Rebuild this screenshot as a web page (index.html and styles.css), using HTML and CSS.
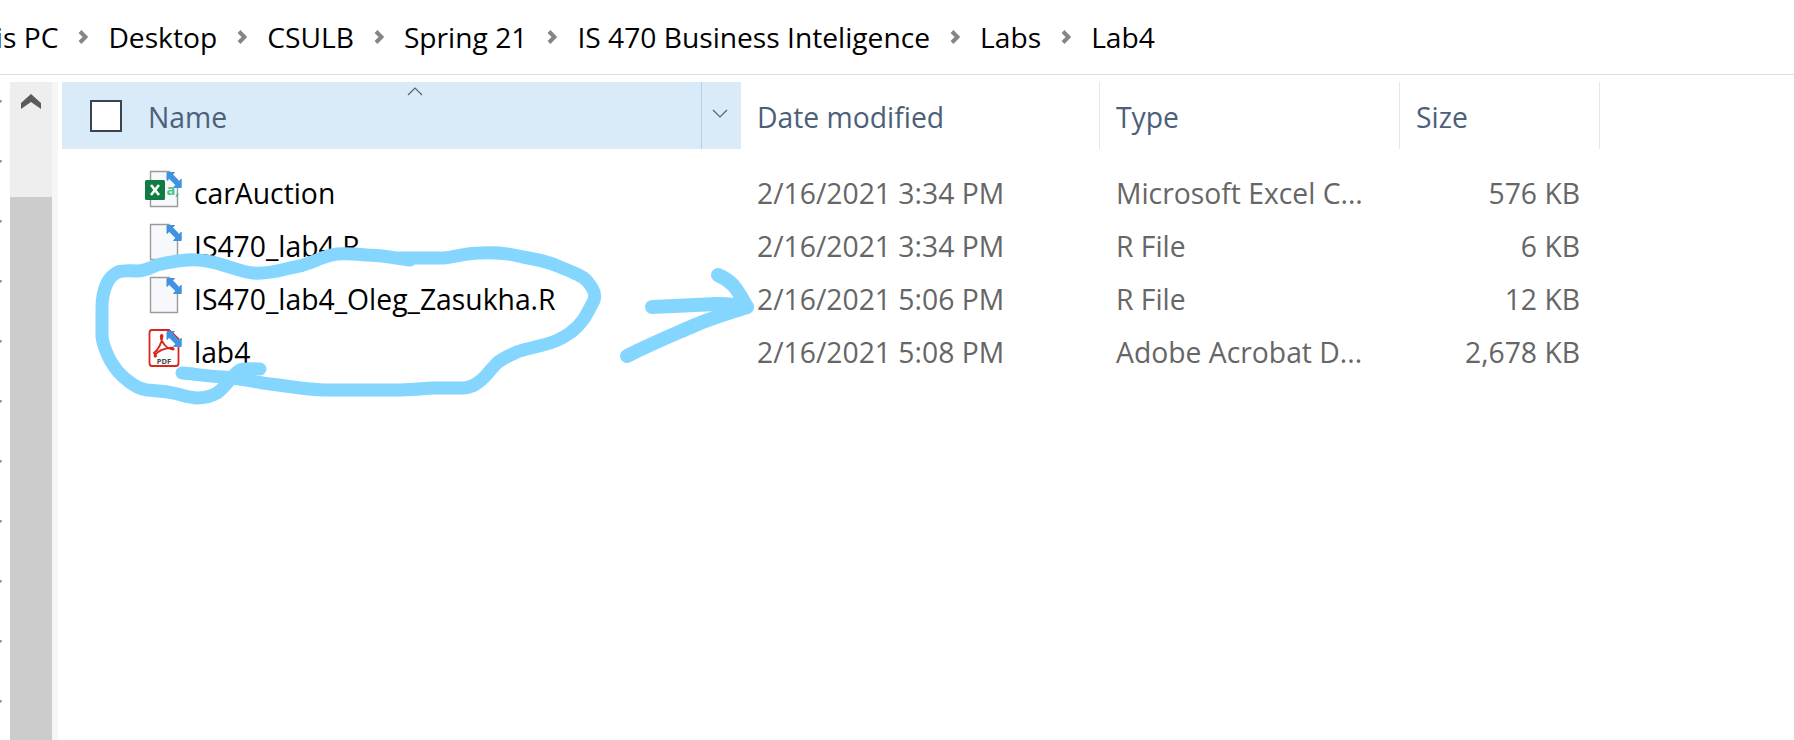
FILE: index.html
```html
<!DOCTYPE html>
<html lang="en">
<head>
    <meta charset="UTF-8">
    <title>Lab4</title>
    <link rel="stylesheet" href="styles.css">
</head>
<body>
    <svg class="defs" width="0" height="0">
        <defs>
            <g id="shortcut">
                <path d="M24 5.5 H31.5 L29.4 7.8 L36 14.4 L38.2 12.2 V20.5 H30.5 L32.8 18 L26.2 11.4 L24 13.5 Z" fill="#3f93e0" stroke="#3f93e0" stroke-width="1"/>
            </g>
            <g id="page">
                <path d="M7.5 4.5 H26 L34.5 13 V39.5 H7.5 Z" fill="#f6f8fb" stroke="#9a9a9a" stroke-width="1.4"/>
            </g>
        </defs>
    </svg>

    <nav class="crumbs">
        <span class="crumb first">This PC</span>
        <svg class="chev" viewBox="0 0 10 14"><path d="M2 1.5 L7.5 7 L2 12.5" /></svg>
        <span class="crumb">Desktop</span>
        <svg class="chev" viewBox="0 0 10 14"><path d="M2 1.5 L7.5 7 L2 12.5" /></svg>
        <span class="crumb">CSULB</span>
        <svg class="chev" viewBox="0 0 10 14"><path d="M2 1.5 L7.5 7 L2 12.5" /></svg>
        <span class="crumb">Spring 21</span>
        <svg class="chev" viewBox="0 0 10 14"><path d="M2 1.5 L7.5 7 L2 12.5" /></svg>
        <span class="crumb">IS 470 Business Inteligence</span>
        <svg class="chev" viewBox="0 0 10 14"><path d="M2 1.5 L7.5 7 L2 12.5" /></svg>
        <span class="crumb">Labs</span>
        <svg class="chev" viewBox="0 0 10 14"><path d="M2 1.5 L7.5 7 L2 12.5" /></svg>
        <span class="crumb">Lab4</span>
    </nav>

    <main class="main">
        <div class="ticks"></div>
        <div class="scrollbar">
            <div class="scroll-up">
                <svg width="20" height="16" viewBox="0 0 20 16"><path d="M10 0 L20 9 V15 L10 8 L0 15 V9 Z" fill="#5b5b5b"/></svg>
            </div>
            <div class="scroll-thumb"></div>
        </div>
        <div class="strip"></div>

        <section class="list">
            <div class="head">
                <div class="col-name">
                    <span class="check"></span>
                    <span class="label">Name</span>
                    <svg class="sort" width="16" height="9" viewBox="0 0 16 9"><path d="M1 8 L8 1 L15 8"/></svg>
                    <span class="drop">
                        <svg width="16" height="9" viewBox="0 0 16 9"><path d="M1 1 L8 8 L15 1"/></svg>
                    </span>
                </div>
                <div class="col"><span class="label">Date modified</span></div>
                <div class="col"><span class="label">Type</span></div>
                <div class="col"><span class="label">Size</span></div>
            </div>

            <div class="row">
                <div class="file">
                    <svg class="icon" width="40" height="44" viewBox="0 0 40 44">
                        <use href="#page"/>
                        <rect x="2" y="13" width="20" height="20" rx="1.5" fill="#107c41"/>
                        <path d="M8 18 L16 28 M16 18 L8 28" stroke="#fff" stroke-width="2.6" fill="none"/>
                        <text class="xl" x="23.5" y="28">a,</text>
                        <use href="#shortcut"/>
                    </svg>
                    <span>carAuction</span>
                </div>
                <div class="cell">2/16/2021 3:34 PM</div>
                <div class="cell">Microsoft Excel C...</div>
                <div class="cell size">576 KB</div>
            </div>
            <div class="row">
                <div class="file">
                    <svg class="icon" width="40" height="44" viewBox="0 0 40 44">
                        <use href="#page"/>
                        <use href="#shortcut"/>
                    </svg>
                    <span>IS470_lab4.R</span>
                </div>
                <div class="cell">2/16/2021 3:34 PM</div>
                <div class="cell">R File</div>
                <div class="cell size">6 KB</div>
            </div>
            <div class="row">
                <div class="file">
                    <svg class="icon" width="40" height="44" viewBox="0 0 40 44">
                        <use href="#page"/>
                        <use href="#shortcut"/>
                    </svg>
                    <span>IS470_lab4_Oleg_Zasukha.R</span>
                </div>
                <div class="cell">2/16/2021 5:06 PM</div>
                <div class="cell">R File</div>
                <div class="cell size">12 KB</div>
            </div>
            <div class="row">
                <div class="file">
                    <svg class="icon" width="40" height="44" viewBox="0 0 40 44">
                        <path d="M9 4 H26 L35.5 13 V37 Q35.5 40 33 40 H9 Q6.5 40 6.5 37 V7 Q6.5 4 9 4 Z" fill="#fff" stroke="#d8261c" stroke-width="1.8"/>
                        <path d="M11 27 C15 24 19 17 19.5 10 C19.6 8.5 17.8 8.5 17.8 10.5 C17.8 15 23 23 30 23.5 C31.5 23.4 30.5 21.6 28 21.8 C22 22.4 15 25 12 29 C11 30.5 12 31 13 30 Z" fill="none" stroke="#d8261c" stroke-width="1.9"/>
                        <text class="pdf" x="21" y="37.5" text-anchor="middle">PDF</text>
                        <use href="#shortcut"/>
                    </svg>
                    <span>lab4</span>
                </div>
                <div class="cell">2/16/2021 5:08 PM</div>
                <div class="cell">Adobe Acrobat D...</div>
                <div class="cell size">2,678 KB</div>
            </div>
        </section>
    </main>

    <!-- hand drawn marker on top of the window -->
    <svg class="ink" width="1794" height="740" viewBox="0 0 1794 740">
        <path d="M400 258 L443 258 C455 257 465 253 480 253 C500 252 512 254 523 257 C540 260 550 262 560 267 C575 273 583 276 587 281 C595 290 597 297 592 304 C586 316 582 324 570 333 C560 340 552 343 543 345 C532 348 525 349 517 352 C508 356 503 358 497 363 C490 370 486 377 480 381 C473 387 468 388 463 388 L433 388 C420 389 410 390 400 390 L323 390 C300 389 280 385 263 383 C245 380 235 378 223 377 C205 376 195 374 182 373"/>
        <path d="M410 260 C395 258 380 255 367 255 C355 254 345 253 337 254 C328 255 325 257 317 260 C305 265 298 267 290 268 C275 272 265 274 253 273 C243 272 233 268 223 265 C210 261 198 259 187 260 C175 261 168 262 157 265 C150 268 145 271 137 271 C130 271 124 270 118 272 C112 275 109 279 107 283 C103 292 102 298 102 307 L102 337 C103 345 106 352 110 360 C114 367 120 375 127 380 C134 386 140 389 147 390 C156 391 164 391 173 393 C182 395 190 398 197 398 C205 398 212 396 217 393 C223 389 226 384 230 380 C233 376 236 372 240 370 C246 368 252 369 260 369"/>
        <path class="arrow" d="M652 307 L717 304 C728 304 738 305 747 307"/>
        <path class="arrow" d="M718 275 C725 278 729 281 733 285 C739 292 743 300 747 307 C729 313 711 318 693 326 C675 334 655 342 627 356"/>
    </svg>
</body>
</html>
```

FILE: styles.css
```css
* {
    box-sizing: border-box;
}
html, body {
    margin: 0;
    height: 740px;
    overflow: hidden;
}
body {
    font-family: "Open Sans", "Noto Sans", sans-serif;
    background: #fff;
    color: #000;
    position: relative;
}
.defs {
    display: block;
    height: 0;
}
.crumbs {
    display: flex;
    align-items: center;
    gap: 20px;
    height: 75px;
    border-bottom: 1px solid #dcdcdc;
    font-size: 28.2px;
    white-space: nowrap;
}
.crumb.first {
    margin-left: -37px;
}
.chev {
    width: 10px;
    height: 14px;
    flex: none;
}
.chev path {
    fill: none;
    stroke: #858585;
    stroke-width: 4;
}
.main {
    display: flex;
    height: 665px;
    padding-top: 7px;
}
.ticks {
    width: 10px;
    margin-top: -7px;
    background-image: radial-gradient(circle at 0 1px, #999 1.5px, transparent 2px);
    background-size: 10px 60px;
    background-position: 0 25px;
}
.scrollbar {
    width: 42px;
    display: flex;
    flex-direction: column;
}
.scroll-up {
    height: 115px;
    background: #eeeeee;
    display: flex;
    justify-content: center;
    align-items: flex-start;
    padding-top: 12px;
}
.scroll-thumb {
    flex: 1;
    background: #cccccc;
}
.strip {
    width: 6px;
    background: #f6f6f6;
    margin-right: 4px;
}
.list {
    flex: 1;
    font-size: 28.3px;
}
.head, .row {
    display: grid;
    grid-template-columns: 679px 359px 300px 200px;
}
.head {
    height: 67px;
    color: #4c607a;
    margin-bottom: 17px;
}
.label {
    padding-top: 2px;
}
.col-name {
    background: #d9eaf8;
    display: flex;
    align-items: center;
    position: relative;
    padding-left: 28px;
    gap: 26px;
}
.check {
    width: 32px;
    height: 32px;
    background: #fff;
    border: 2px solid #3a4450;
}
.sort {
    position: absolute;
    left: 345px;
    top: 5px;
}
.sort path, .drop path {
    fill: none;
    stroke: #556070;
    stroke-width: 1.2;
}
.drop {
    position: absolute;
    right: 0;
    top: 0;
    bottom: 0;
    width: 40px;
    border-left: 1px solid #b7cfe3;
    display: flex;
    align-items: center;
    justify-content: center;
    padding: 0 3px 4px 0;
}
.col {
    display: flex;
    align-items: center;
    padding-left: 16px;
    border-right: 1px solid #e6e6e6;
}
.row {
    height: 53px;
    align-items: center;
}
.file {
    display: flex;
    align-items: center;
    padding-left: 81px;
    gap: 11px;
}
.icon {
    flex: none;
    margin-bottom: 7px;
}
.xl {
    font-size: 14.5px;
    font-weight: 700;
    fill: #46c585;
}
.pdf {
    font-size: 7.5px;
    font-weight: 700;
    fill: #444;
}
.cell {
    padding-left: 16px;
    color: #666;
}
.size {
    text-align: right;
    padding-right: 20px;
}
.ink {
    position: absolute;
    left: 0;
    top: 0;
    pointer-events: none;
}
.ink path {
    fill: none;
    stroke: #84d6ff;
    stroke-width: 13;
    stroke-linecap: round;
    stroke-linejoin: round;
}
.ink .arrow {
    stroke-width: 14;
}
```
